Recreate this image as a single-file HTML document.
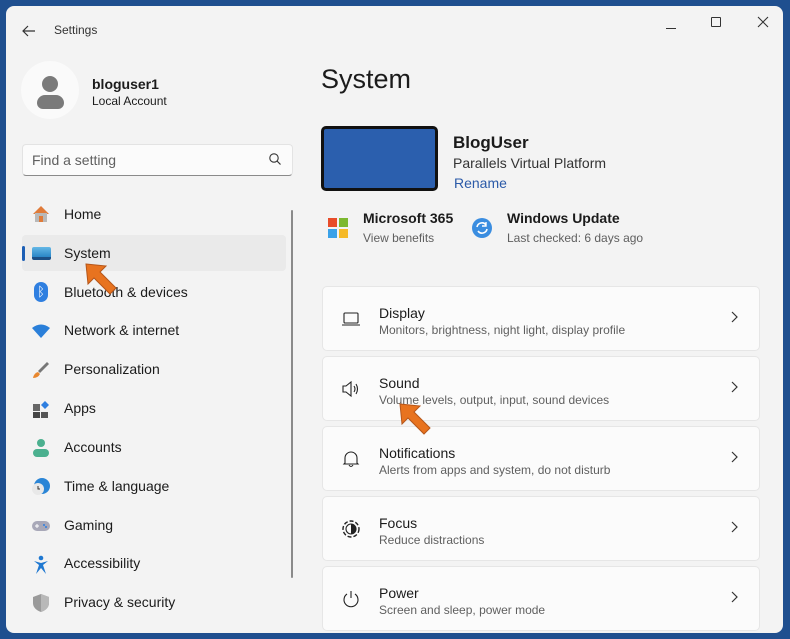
<!DOCTYPE html>
<html><head><meta charset="utf-8"><style>
*{margin:0;padding:0;box-sizing:border-box}
body{width:790px;height:639px;background:#1f4f8f;font-family:"Liberation Sans",sans-serif;position:relative;overflow:hidden;color:#1b1b1b}
.win{position:absolute;left:6px;top:6px;width:777px;height:627px;background:#f3f3f3;border-radius:8px;overflow:hidden}
.a{position:absolute}
.nav{position:absolute;left:58px;font-size:14px;color:#1b1b1b}
.ic{position:absolute;left:25px;width:20px;height:20px}
.card{position:absolute;left:316px;width:438px;height:65px;background:#fbfbfb;border:1px solid #e6e6e6;border-radius:5px}
.card .t{position:absolute;left:56px;top:18px;font-size:14px}
.card .s{position:absolute;left:56px;top:36px;font-size:12px;color:#5f5f5f}
.card .ch{position:absolute;left:406px;top:22px}
.card svg.i{position:absolute;left:18px;top:22px}
</style></head><body>
<div class="win">
<svg class="a" style="left:15px;top:18px" width="16" height="14"><path d="M14 7H2M7 2L2 7L7 12" stroke="#333" stroke-width="1.2" fill="none"/></svg>
<div class="a" style="left:48px;top:17px;font-size:12px;color:#333">Settings</div>
<div class="a" style="left:660px;top:22px;width:10px;height:1px;background:#333"></div>
<div class="a" style="left:705px;top:11px;width:10px;height:10px;border:1px solid #333;border-radius:1px"></div>
<svg class="a" style="left:751px;top:10px" width="12" height="12"><path d="M1 1L11 11M11 1L1 11" stroke="#333" stroke-width="1.1"/></svg>
<div class="a" style="left:15px;top:55px;width:58px;height:58px;border-radius:50%;background:#fafafa"></div>
<div class="a" style="left:36px;top:70px;width:16px;height:16px;border-radius:50%;background:#7a7a7a"></div>
<div class="a" style="left:31px;top:89px;width:27px;height:14px;border-radius:8px 8px 6px 6px;background:#7a7a7a"></div>
<div class="a" style="left:86px;top:70px;font-size:14px;font-weight:bold">bloguser1</div>
<div class="a" style="left:86px;top:88px;font-size:12px">Local Account</div>
<div class="a" style="left:16px;top:138px;width:271px;height:32px;background:#fbfbfb;border:1px solid #e3e3e3;border-bottom-color:#8a8a8a;border-radius:4px"></div>
<div class="a" style="left:26px;top:146px;font-size:14px;color:#5f5f5f">Find a setting</div>
<svg class="a" style="left:262px;top:146px" width="14" height="14"><circle cx="6" cy="6" r="4.2" stroke="#333" stroke-width="1.1" fill="none"/><path d="M9 9L12.5 12.5" stroke="#333" stroke-width="1.2"/></svg>
<div class="a" style="left:16px;top:229px;width:264px;height:36px;background:#eaeaea;border-radius:4px"></div>
<div class="a" style="left:16px;top:240px;width:3px;height:15px;background:#1d5fb5;border-radius:2px"></div>
<svg class="ic" style="top:198px" viewBox="0 0 20 20"><path d="M2 10L10 2L18 10Z" fill="#e07b39"/><rect x="4" y="9" width="12" height="9" fill="#b9b9b9"/><rect x="8" y="12" width="4" height="6" fill="#e07b39"/></svg>
<div class="nav" style="top:200px">Home</div>
<div class="a" style="left:26px;top:241px;width:19px;height:13px;background:linear-gradient(#64b8e6,#2a86c6);border-bottom:3px solid #1c4f86;border-radius:2px"></div>
<div class="nav" style="top:239px">System</div>
<div class="a" style="left:28px;top:276px;width:14px;height:20px;border-radius:7px;background:#2f7fe0;color:#fff;font-size:13px;text-align:center;line-height:20px">ᛒ</div>
<div class="nav" style="top:278px">Bluetooth &amp; devices</div>
<svg class="ic" style="top:316px" viewBox="0 0 20 20"><path d="M1 6Q10 -1 19 6L10 16Z" fill="#2a7fd9"/></svg>
<div class="nav" style="top:316px">Network &amp; internet</div>
<svg class="ic" style="top:354px" viewBox="0 0 20 20"><path d="M16 2L18 4L9 13L7 11Z" fill="#777"/><path d="M7 12Q3 13 2 18Q7 18 9 14Z" fill="#e8872f"/></svg>
<div class="nav" style="top:355px">Personalization</div>
<svg class="ic" style="top:394px" viewBox="0 0 20 20"><rect x="2" y="4" width="7" height="7" fill="#666"/><rect x="2" y="12" width="7" height="6" fill="#444"/><rect x="10" y="12" width="7" height="6" fill="#555"/><path d="M14 1L18 5L14 9L10 5Z" fill="#2f7fe0"/></svg>
<div class="nav" style="top:394px">Apps</div>
<svg class="ic" style="top:432px" viewBox="0 0 20 20"><circle cx="10" cy="5" r="4" fill="#4bb08f"/><rect x="2" y="11" width="16" height="8" rx="4" fill="#4bb08f"/></svg>
<div class="nav" style="top:433px">Accounts</div>
<svg class="ic" style="top:471px" viewBox="0 0 20 20"><circle cx="11" cy="9" r="8" fill="#2a85d6"/><circle cx="7" cy="12" r="6" fill="#e8e8e8"/><path d="M7 9V12H9" stroke="#333" fill="none"/></svg>
<div class="nav" style="top:472px">Time &amp; language</div>
<svg class="ic" style="top:510px" viewBox="0 0 20 20"><rect x="1" y="5" width="18" height="10" rx="5" fill="#a8a8b8"/><path d="M4 10H8M6 8V12" stroke="#fff"/><circle cx="13" cy="9" r="1" fill="#2f7fe0"/><circle cx="15" cy="11" r="1" fill="#2f7fe0"/></svg>
<div class="nav" style="top:511px">Gaming</div>
<svg class="ic" style="top:549px" viewBox="0 0 20 20"><circle cx="10" cy="3" r="2.3" fill="#1f78d1"/><path d="M3 6L10 8L17 6L12 10L15 19L10 13L5 19L8 10Z" fill="#1f78d1"/></svg>
<div class="nav" style="top:549px">Accessibility</div>
<svg class="ic" style="top:587px" viewBox="0 0 20 20"><path d="M10 1L18 4V10Q18 16 10 19Q2 16 2 10V4Z" fill="#9a9a9a"/><path d="M10 1L18 4V10Q18 16 10 19Z" fill="#b8b8b8"/></svg>
<div class="nav" style="top:588px">Privacy &amp; security</div>
<div class="a" style="left:285px;top:204px;width:2px;height:368px;background:#8a8a8a;border-radius:1px"></div>
<div class="a" style="left:315px;top:58px;font-size:27px">System</div>
<div class="a" style="left:315px;top:120px;width:117px;height:65px;background:#2b5fae;border:3px solid #111;border-radius:5px"></div>
<div class="a" style="left:447px;top:127px;font-size:17px;font-weight:bold">BlogUser</div>
<div class="a" style="left:447px;top:149px;font-size:14px;color:#333">Parallels Virtual Platform</div>
<div class="a" style="left:448px;top:169px;font-size:14px;color:#2b5aa8">Rename</div>
<svg class="a" style="left:322px;top:212px" width="20" height="20"><rect x="0" y="0" width="9" height="9" fill="#e84c2a"/><rect x="11" y="0" width="9" height="9" fill="#7cb82f"/><rect x="0" y="11" width="9" height="9" fill="#3aa1e8"/><rect x="11" y="11" width="9" height="9" fill="#f5b927"/></svg>
<div class="a" style="left:357px;top:204px;font-size:14px;font-weight:bold">Microsoft 365</div>
<div class="a" style="left:357px;top:225px;font-size:12px;color:#5f5f5f">View benefits</div>
<svg class="a" style="left:466px;top:212px" width="20" height="20"><circle cx="10" cy="10" r="10" fill="#3a8de0"/><path d="M5 9A5 5 0 0 1 14 7M15 11A5 5 0 0 1 6 13" stroke="#fff" stroke-width="1.6" fill="none"/><path d="M14 4V8H10" stroke="#fff" stroke-width="1.4" fill="none"/></svg>
<div class="a" style="left:501px;top:204px;font-size:14px;font-weight:bold">Windows Update</div>
<div class="a" style="left:501px;top:225px;font-size:12px;color:#5f5f5f">Last checked: 6 days ago</div>

<div class="card" style="top:280px"><svg class="i" width="20" height="20"><rect x="3" y="4" width="14" height="10" rx="1" stroke="#222" stroke-width="1.1" fill="none"/><path d="M1 16H19" stroke="#222" stroke-width="1.1"/></svg><div class="t">Display</div><div class="s">Monitors, brightness, night light, display profile</div><svg class="ch" width="10" height="16"><path d="M3 3L8 8L3 13" stroke="#333" stroke-width="1.2" fill="none"/></svg></div>
<div class="card" style="top:350px"><svg class="i" width="20" height="20"><path d="M2 7H5L10 3V17L5 13H2Z" stroke="#222" stroke-width="1.1" fill="none"/><path d="M13 7Q15 10 13 13M15 5Q18 10 15 15" stroke="#222" stroke-width="1.1" fill="none"/></svg><div class="t">Sound</div><div class="s">Volume levels, output, input, sound devices</div><svg class="ch" width="10" height="16"><path d="M3 3L8 8L3 13" stroke="#333" stroke-width="1.2" fill="none"/></svg></div>
<div class="card" style="top:420px"><svg class="i" width="20" height="20"><path d="M4 14V9A6 6 0 0 1 16 9V14L17 15H3Z" stroke="#222" stroke-width="1.1" fill="none"/><path d="M8 16Q10 19 12 16" stroke="#222" stroke-width="1.1" fill="none"/></svg><div class="t">Notifications</div><div class="s">Alerts from apps and system, do not disturb</div><svg class="ch" width="10" height="16"><path d="M3 3L8 8L3 13" stroke="#333" stroke-width="1.2" fill="none"/></svg></div>
<div class="card" style="top:490px"><svg class="i" width="20" height="20"><circle cx="10" cy="10" r="8" stroke="#222" stroke-width="1.4" stroke-dasharray="4 2" fill="none"/><circle cx="10" cy="10" r="5" stroke="#222" stroke-width="1.1" fill="none"/><path d="M10 5A5 5 0 0 1 10 15Z" fill="#222"/></svg><div class="t">Focus</div><div class="s">Reduce distractions</div><svg class="ch" width="10" height="16"><path d="M3 3L8 8L3 13" stroke="#333" stroke-width="1.2" fill="none"/></svg></div>
<div class="card" style="top:560px"><svg class="i" width="20" height="20"><path d="M6 5A7 7 0 1 0 14 5" stroke="#222" stroke-width="1.1" fill="none"/><path d="M10 2V9" stroke="#222" stroke-width="1.1"/></svg><div class="t">Power</div><div class="s">Screen and sleep, power mode</div><svg class="ch" width="10" height="16"><path d="M3 3L8 8L3 13" stroke="#333" stroke-width="1.2" fill="none"/></svg></div>
</div>
<svg class="a" style="left:84px;top:262px" width="40" height="40"><path d="M2 2L22 4L16 10L32 26L26 32L10 16L4 22Z" fill="#e8731f" stroke="#b5561a" stroke-width="1"/></svg>
<svg class="a" style="left:398px;top:402px" width="40" height="40"><path d="M2 2L22 4L16 10L32 26L26 32L10 16L4 22Z" fill="#e8731f" stroke="#b5561a" stroke-width="1"/></svg>
</body></html>
